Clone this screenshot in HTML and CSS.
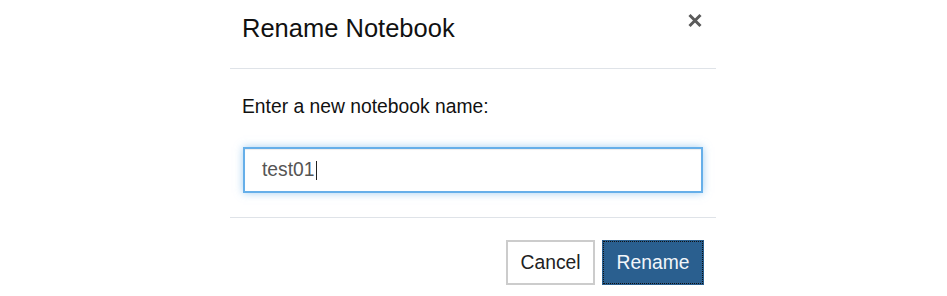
FILE: index.html
```html
<!DOCTYPE html>
<html lang="en">
<head>
<meta charset="utf-8">
<title>Rename Notebook</title>
<link rel="stylesheet" href="styles.css">
</head>
<body>
<div class="modal">
  <div class="modal-header">
    <h4 class="modal-title">Rename Notebook</h4>
    <button class="close" aria-label="Close">
      <svg width="14" height="15" viewBox="0 0 14 15"><path d="M1.5 2 L12.5 13 M12.5 2 L1.5 13" stroke="#5b5b5b" stroke-width="3" stroke-linecap="butt"/></svg>
    </button>
  </div>
  <div class="modal-body">
    <p class="prompt">Enter a new notebook name:</p>
    <div class="text-input" role="textbox"><span class="value">test01</span><span class="caret"></span></div>
  </div>
  <div class="modal-footer">
    <button class="btn btn-default">Cancel</button>
    <button class="btn btn-primary">Rename</button>
  </div>
</div>
</body>
</html>
```

FILE: styles.css
```css
html, body {
  margin: 0;
  padding: 0;
  background: #fff;
}
body {
  font-family: "Liberation Sans", Arial, sans-serif;
  color: #000;
}
.modal {
  width: 486px;
  margin-left: 230px;
}
.modal-header {
  display: flex;
  justify-content: space-between;
  align-items: flex-start;
  height: 69px;
  box-sizing: border-box;
  padding: 14px 14px 0 12px;
  border-bottom: 1px solid #dfe3e8;
}
.modal-title {
  margin: 0;
  font-size: 25.5px;
  font-weight: normal;
  line-height: 28px;
  color: #111;
}
.close {
  border: 0;
  background: none;
  padding: 0;
  margin-top: -1px;
  display: flex;
  cursor: pointer;
}
.modal-body {
  padding: 24px 13px 24px 13px;
  border-bottom: 1px solid #dfe3e8;
}
.prompt {
  margin: 0 0 27px -1px;
  font-size: 19.3px;
  line-height: 27px;
  color: #111;
}
.text-input {
  display: flex;
  align-items: center;
  height: 46px;
  box-sizing: border-box;
  border: 2px solid #66afe9;
  padding: 0 17px;
  font-size: 19.3px;
  color: #555;
  box-shadow: inset 0 1px 1px rgba(0,0,0,.075), 0 0 8px rgba(102,175,233,.6);
}
.caret {
  display: inline-block;
  width: 1px;
  height: 19px;
  margin-left: 1px;
  margin-top: 1px;
  background: #222;
}
.modal-footer {
  display: flex;
  justify-content: flex-end;
  gap: 7px;
  padding: 22px 12px 0 12px;
}
.btn {
  font-family: "Liberation Sans", Arial, sans-serif;
  font-size: 19.3px;
  height: 45px;
  box-sizing: border-box;
  padding: 0 12.5px;
  border: 2px solid transparent;
  line-height: 1;
  cursor: pointer;
}
.btn-default {
  background: #fff;
  border-color: #ccc;
  color: #222;
}
.btn-primary {
  background: #2a5f8f;
  border-color: #2a5f8f;
  color: #f2f6fa;
  outline: 1px dotted #111;
  outline-offset: -2px;
}
```
